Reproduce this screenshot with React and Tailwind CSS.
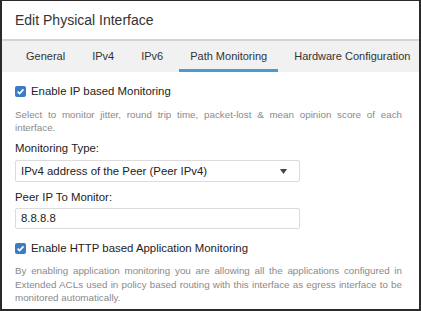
export default function App() {
  const tabs = ['General', 'IPv4', 'IPv6', 'Path Monitoring', 'Hardware Configuration']

  const Check = () => (
    <span className="w-[11px] h-[11px] rounded-[2px] bg-[#3b7dc4] flex items-center justify-center shrink-0">
      <svg width="9" height="9" viewBox="0 0 10 10">
        <path d="M1.8 5.2 L4 7.4 L8.3 2.6" fill="none" stroke="white" strokeWidth="1.8" />
      </svg>
    </span>
  )

  return (
    <div
      className="w-[421px] h-[311px] bg-white border-t border-l-2 border-r-2 border-b-2 border-[#2a2a2a] overflow-hidden text-[#222]"
      style={{ fontFamily: '"Liberation Sans", Arial, sans-serif' }}
    >
      {/* Header */}
      <div className="h-[40px] flex items-center pl-[13px] border-b-2 border-[#d4d4d4]">
        <h2 className="text-[14px] text-[#333]">Edit Physical Interface</h2>
      </div>

      {/* Tabs */}
      <div className="h-[31px] bg-[#f1f1f1] flex items-end gap-[5px] pl-[13px] overflow-hidden">
        {tabs.map((t) => (
          <div
            key={t}
            className={`shrink-0 whitespace-nowrap px-[11px] h-full flex items-center text-[11px] text-[#333] border-b-[3px] ${
              t === 'Path Monitoring' ? 'border-[#4a9bd4]' : 'border-transparent'
            }`}
          >
            <span className="pt-[3px]">{t}</span>
          </div>
        ))}
      </div>

      {/* Body */}
      <div className="px-[13px] pt-[11px]">
        <label className="flex items-center gap-[5px] text-[11.4px] text-[#222]">
          <Check />
          Enable IP based Monitoring
        </label>
        <p className="mt-[8px] text-[9.8px] leading-[13px] text-[#8a8a8a] text-justify pr-[4px]">
          Select to monitor jitter, round trip time, packet-lost &amp; mean opinion score of each interface.
        </p>

        <div className="mt-[6px] text-[11.4px] text-[#222]">Monitoring Type:</div>
        <div className="mt-[3px] w-[285px] h-[22px] border border-[#dcdcdc] rounded-[2px] flex items-center justify-between pl-[5px] pr-[12px] text-[11.4px] text-[#222]">
          <span>IPv4 address of the Peer (Peer IPv4)</span>
          <svg width="7" height="5" viewBox="0 0 7 5">
            <path d="M0 0 L7 0 L3.5 5 Z" fill="#444" />
          </svg>
        </div>

        <div className="mt-[7px] text-[11.4px] text-[#222]">Peer IP To Monitor:</div>
        <div className="mt-[2px] w-[285px] h-[21px] border border-[#dcdcdc] rounded-[2px] flex items-center pl-[5px] text-[11.4px] text-[#222]">
          8.8.8.8
        </div>

        <label className="mt-[11px] flex items-center gap-[5px] text-[11.4px] text-[#222]">
          <Check />
          Enable HTTP based Application Monitoring
        </label>
        <p className="mt-[7px] text-[9.8px] leading-[13.3px] text-[#8a8a8a] text-justify pr-[4px]">
          By enabling application monitoring you are allowing all the applications configured in Extended ACLs used in policy based routing with this interface as egress interface to be monitored automatically.
        </p>
      </div>
    </div>
  )
}
